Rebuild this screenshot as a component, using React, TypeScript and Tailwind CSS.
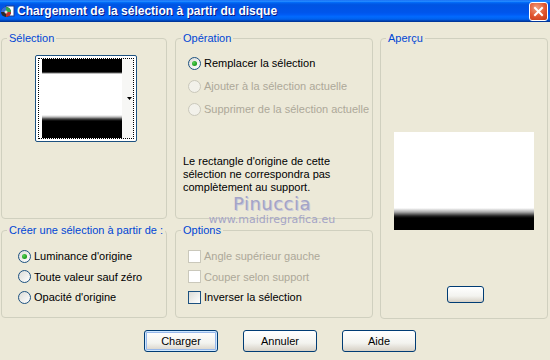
import clsx from "clsx";

const FONT = "font-['Liberation_Sans',Arial,sans-serif]";

function Radio({ checked, disabled }: { checked?: boolean; disabled?: boolean }) {
  return (
    <span
      className={clsx(
        "w-[13px] h-[13px] rounded-full border flex items-center justify-center shrink-0",
        disabled
          ? "border-[#CAC8BB] bg-[#F2F1EA]"
          : "border-[#1C5180] bg-[linear-gradient(135deg,#DCDCD7,#FFFFFF)]"
      )}
    >
      {checked && (
        <span className="w-[5px] h-[5px] rounded-full bg-[radial-gradient(circle_at_35%_35%,#55D155,#21A121_60%,#1A8A1A)]" />
      )}
    </span>
  );
}

function Check({ disabled }: { disabled?: boolean }) {
  return (
    <span
      className={clsx(
        "w-[13px] h-[13px] border shrink-0",
        disabled
          ? "border-[#CAC8BB] bg-white"
          : "border-[#1C5180] bg-[linear-gradient(135deg,#DCDCD7,#FFFFFF)]"
      )}
    />
  );
}

function Group({
  title,
  className,
  children,
}: {
  title: string;
  className?: string;
  children?: React.ReactNode;
}) {
  return (
    <fieldset className={clsx("border border-[#D0D0BF] rounded-[4px] min-w-0", className)}>
      <legend className="ml-[5px] px-[2px] text-[#0046D5] leading-[13px]">{title}</legend>
      {children}
    </fieldset>
  );
}

function XpButton({ label, isDefault }: { label: string; isDefault?: boolean }) {
  return (
    <button
      className={clsx(
        "w-[74px] h-[22px] rounded-[3px] border border-[#003C74] text-black text-[11px] leading-none",
        "bg-[linear-gradient(to_bottom,#FFFFFF,#F3F3EF_60%,#D6D0C5)]",
        isDefault && "shadow-[inset_0_0_0_1px_#CEE7FF,inset_0_0_0_2px_#98B8EA]"
      )}
    >
      {label}
    </button>
  );
}

export default function App() {
  return (
    <div className={clsx("w-[550px] h-[360px] bg-[#ECE9D8] flex flex-col text-[11px] text-black relative overflow-hidden", FONT)}>
      {/* title bar */}
      <div className="h-[22px] flex items-center bg-[linear-gradient(to_bottom,#0058EE_0%,#3593FF_4%,#288EFF_6%,#127DFF_8%,#036FFC_10%,#0262EE_14%,#0057E5_20%,#0054E3_24%,#0055EB_56%,#005BF5_66%,#026AFE_76%,#0062EF_86%,#0052D6_92%,#0040AB_94%,#003092_100%)]">
        <svg width="15" height="15" viewBox="0 0 15 15" className="shrink-0">
          <rect x="6" y="2" width="8" height="10" fill="#fff" stroke="#1C3F8C" strokeWidth="1" />
          <circle cx="6" cy="8" r="5" fill="#2A2A2A" />
          <path d="M6 3 A5 5 0 0 1 11 8 L6 8 Z" fill="#2FA84F" />
          <path d="M6 8 L11 8 A5 5 0 0 1 6 13 Z" fill="#C0302A" />
          <path d="M6 8 L1 8 A5 5 0 0 1 6 3 Z" fill="#3A6FD8" />
          <circle cx="6" cy="8" r="1.5" fill="#ddd" />
        </svg>
        <span className="ml-[2px] text-white font-bold text-[12px] [text-shadow:1px_1px_0_#0A1883]">
          Chargement de la sélection à partir du disque
        </span>
        <div className="ml-auto mr-[2px] w-[19px] h-[19px] rounded-[3px] border border-white bg-[radial-gradient(circle_at_40%_30%,#F0A080,#E0542E_55%,#C23A18)] flex items-center justify-center">
          <svg width="11" height="11" viewBox="0 0 11 11">
            <path d="M2 2 L9 9 M9 2 L2 9" stroke="#fff" strokeWidth="2" strokeLinecap="square" />
          </svg>
        </div>
      </div>

      {/* body */}
      <div className="flex pl-[1px] pt-[10px]">
        <div className="w-[166px] flex flex-col gap-[5px]">
          <Group title="Sélection" className="h-[187px]">
            <div className="ml-[33px] mt-[10px] w-[102px] h-[87px] border border-[#1C5180] rounded-[2px] bg-white p-[2px]">
              <div className="h-full border border-dotted border-black flex">
                <div className="ml-[3px] w-[80px] bg-[linear-gradient(to_bottom,#000_0px,#000_13px,#777_14px,#fff_15px,#fff_56px,#bbb_58px,#444_60px,#000_62px,#000_100%)]" />
                <div className="flex-1 bg-[#F7F7F5] flex items-center justify-end pr-[1px]">
                  <svg width="5" height="4" viewBox="0 0 5 4">
                    <path d="M0 0 H5 L2.5 3 Z" fill="#000" />
                  </svg>
                </div>
              </div>
            </div>
          </Group>
          <Group title="Créer une sélection à partir de :" className="h-[94px]">
            <div className="mt-[9px] pl-[16px] flex flex-col">
              {["Luminance d'origine", "Toute valeur sauf zéro", "Opacité d'origine"].map((t, i) => (
                <div key={t} className="h-[20.5px] flex items-center gap-[3px]">
                  <Radio checked={i === 0} />
                  <span>{t}</span>
                </div>
              ))}
            </div>
          </Group>
        </div>

        <div className="ml-[8px] w-[198px] flex flex-col gap-[5px]">
          <Group title="Opération" className="h-[187px]">
            <div className="mt-[7px] pl-[12px] flex flex-col">
              <div className="h-[23px] flex items-center gap-[3px]">
                <Radio checked />
                <span>Remplacer la sélection</span>
              </div>
              <div className="h-[23px] flex items-center gap-[3px] text-[#ACA899]">
                <Radio disabled />
                <span>Ajouter à la sélection actuelle</span>
              </div>
              <div className="h-[23px] flex items-center gap-[3px] text-[#ACA899]">
                <Radio disabled />
                <span>Supprimer de la sélection actuelle</span>
              </div>
            </div>
            <p className="mt-[34px] pl-[7px] leading-[13px]">
              Le rectangle d'origine de cette
              <br />
              sélection ne correspondra pas
              <br />
              complètement au support.
            </p>
          </Group>
          <Group title="Options" className="h-[94px]">
            <div className="mt-[9px] pl-[12px] flex flex-col">
              <div className="h-[20.5px] flex items-center gap-[3px] text-[#ACA899]">
                <Check disabled />
                <span>Angle supérieur gauche</span>
              </div>
              <div className="h-[20.5px] flex items-center gap-[3px] text-[#ACA899]">
                <Check disabled />
                <span>Couper selon support</span>
              </div>
              <div className="h-[20.5px] flex items-center gap-[3px]">
                <Check />
                <span>Inverser la sélection</span>
              </div>
            </div>
          </Group>
        </div>

        <div className="ml-[7px] w-[168px]">
          <Group title="Aperçu" className="h-[287px] flex flex-col">
            <div className="mt-[87px] ml-[13px] w-[140px] h-[98px] bg-[linear-gradient(to_bottom,#fff_0px,#fff_76px,#aaa_80px,#222_84px,#000_86px,#000_100%)]" />
            <div className="mt-[56px] ml-[66px] w-[37px] h-[17px] rounded-[3px] border border-[#003C74] bg-[linear-gradient(to_bottom,#FFFFFF,#F3F3EF_60%,#D6D0C5)]" />
          </Group>
        </div>
      </div>

      {/* buttons */}
      <div className="flex pl-[144px] gap-[25px] mt-[11px]">
        <XpButton label="Charger" isDefault />
        <XpButton label="Annuler" />
        <XpButton label="Aide" />
      </div>

      {/* watermark */}
      <div className="absolute left-[210px] top-[195px] w-[124px] flex flex-col items-center text-[#A4A4C6] pointer-events-none font-['DejaVu_Sans',sans-serif]">
        <span className="text-[18px] leading-[18px] tracking-[0.5px] [text-shadow:1px_1px_0_#C8C8DC]">Pinuccia</span>
        <span className="mt-[1px] text-[11px] leading-[11px]">www.maidiregrafica.eu</span>
      </div>
    </div>
  );
}
